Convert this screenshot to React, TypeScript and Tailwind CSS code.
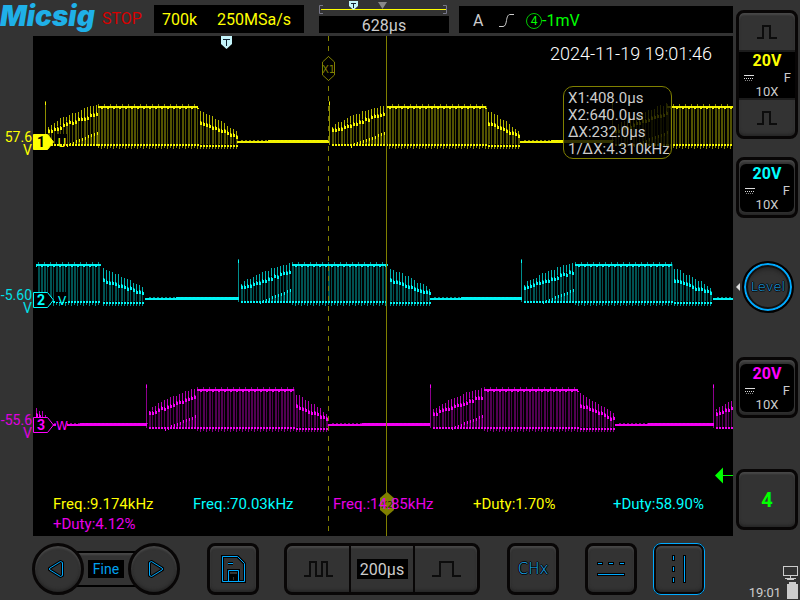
import type { ReactNode } from "react";

type Burst = { start: number; rampEnd: number; flatEnd: number; fallEnd: number };

type Wave = {
  color: string;
  top: number;
  bottom: number;
  rest: number;
  bursts: Burst[];
};

const WAVES: Wave[] = [
  {
    color: "#ffff00",
    top: 106,
    bottom: 144,
    rest: 141,
    bursts: [
      { start: 45, rampEnd: 98, flatEnd: 198, fallEnd: 237 },
      { start: 329, rampEnd: 386, flatEnd: 486, fallEnd: 520 },
      { start: 612, rampEnd: 667, flatEnd: 767, fallEnd: 802 },
    ],
  },
  {
    color: "#00ffff",
    top: 264,
    bottom: 301,
    rest: 298,
    bursts: [
      { start: -45, rampEnd: 8, flatEnd: 101, fallEnd: 145 },
      { start: 238, rampEnd: 292, flatEnd: 388, fallEnd: 430 },
      { start: 521, rampEnd: 575, flatEnd: 672, fallEnd: 713 },
    ],
  },
  {
    color: "#ff00ff",
    top: 389,
    bottom: 427,
    rest: 424,
    bursts: [
      { start: -137, rampEnd: -87, flatEnd: 10, fallEnd: 46 },
      { start: 146, rampEnd: 197, flatEnd: 294, fallEnd: 328 },
      { start: 430, rampEnd: 484, flatEnd: 578, fallEnd: 615 },
      { start: 713, rampEnd: 765, flatEnd: 860, fallEnd: 900 },
    ],
  },
];

const PERIOD = 284;
const LEFT = 36;
const RIGHT = 733;

function buildWave(w: Wave) {
  let seed = 7;
  const rand = () => {
    seed = (seed * 1103515245 + 12345) % 2147483648;
    return seed / 2147483648;
  };
  const out = { dim: "", mid: "", bright: "" };
  const rect = (layer: "dim" | "mid" | "bright", x: number, y: number, wd: number, h: number) => {
    const x0 = Math.max(LEFT, Math.round(x));
    const x1 = Math.min(RIGHT, Math.round(x + wd));
    if (x1 > x0 && h > 0) out[layer] += `M${x0} ${Math.round(y)}h${x1 - x0}v${Math.round(h)}H${x0}z`;
  };
  const mix = (a: number, b: number, f: number) => a + (b - a) * f;
  const { top, bottom } = w;

  for (const b of w.bursts) {
    const s = b.start;
    rect("mid", s, top - 5, 1, bottom - top + 6);
    rect("bright", s, top - 4, 1, 3);

    let n = 0;
    for (let x = s + 3; x < b.rampEnd; x += 3) {
      const f = (x - s) / (b.rampEnd - s);
      const peak = mix(bottom - 14, top - 3, Math.pow(f, 0.65)) + rand() * 2;
      const band = Math.max(peak, mix(bottom - 14, top + 5, f) + rand() * 2 - 1);
      rect("dim", x, peak, 1, bottom - peak + 2);
      if (n % 3 === 0) rect("dim", x + 1, band, 1, bottom - band);
      rect("mid", x, peak, 1, band - peak);
      rect("bright", x, band, 1, 4);
      rect("bright", x + 1, band + 1, 1, 3);
      rect("bright", x, bottom, 2, 2);
      if (f > 0.35) {
        const low = mix(bottom + 1, bottom - 13, (f - 0.35) / 0.65);
        rect("mid", x + 1, low, 1, bottom - low);
        rect("bright", x + 1, low, 1, 3);
      }
      n++;
    }

    n = 0;
    for (let x = b.rampEnd; x < b.flatEnd; x += 3) {
      rect("dim", x, top, 1, bottom - top + 2);
      if (n % 2 === 0 || rand() > 0.6) rect("dim", x + 1, top, 1, bottom - top + 2);
      rect("bright", x, top, Math.min(3, b.flatEnd - x), 2);
      if (n % 2 === 0) rect("mid", x, top - 2, 1, 2);
      if (n % 2 === 1) rect("bright", x, top + 2, 2, 1);
      rect("bright", x, bottom, 2, 2);
      rect("mid", x, bottom + 2, 1, n % 2 ? 3 : 2);
      n++;
    }

    n = 0;
    for (let x = b.flatEnd + 2; x < b.fallEnd; x += 3) {
      const f = (x - b.flatEnd) / (b.fallEnd - b.flatEnd);
      const peak = mix(top + 3, bottom - 13, Math.pow(f, 1.15)) + rand() * 2;
      const band = mix(top + 14, bottom - 9, f) + rand() * 2 - 1;
      rect("dim", x, peak, 1, bottom - peak + 2);
      if (n % 2 === 0) rect("dim", x + 1, band, 1, bottom - band);
      rect("mid", x, peak, 1, band - peak + 2);
      rect("bright", x, band, 1, 4);
      rect("bright", x + 1, band + 1, 1, 3);
      rect("bright", x, bottom + 1, 2, 2);
      rect("mid", x, bottom + 3, 1, 2);
      n++;
    }

    const next = s + PERIOD;
    const third = b.fallEnd + (next - b.fallEnd) / 3;
    rect("bright", b.fallEnd, w.rest, third - b.fallEnd, 2);
    rect("bright", third, w.rest - 1, next - third, 3);
    for (let x = b.fallEnd + 4; x < next; x += 4) rect("mid", x, w.rest - 1, 2, 1);
  }
  return out;
}

const SHAPES = WAVES.map((w) => ({ color: w.color, ...buildWave(w) }));

function Flag({ y, n, label, color, filled }: { y: number; n: string; label: string; color: string; filled?: boolean }) {
  return (
    <g>
      <path d={`M33.5 ${y - 7.5}H47.5L53.5 ${y}L47.5 ${y + 7.5}H33.5z`} fill={filled ? color : "#000"} stroke={color} />
      <text x="41" y={y + 5} textAnchor="middle" fontSize="14" fontWeight="700" fill={filled ? "#000" : color} className="font-['Roboto']">
        {n}
      </text>
      <rect x="56" y={y - 8} width="11" height="10" fill="#000" />
      <text x="62" y={y + 5} textAnchor="middle" fontSize="12" fill={color} className="font-['DejaVu_Sans']">
        {label}
      </text>
    </g>
  );
}

function Scope() {
  return (
    <svg viewBox="33 36 700 500" preserveAspectRatio="none" className="absolute inset-0 h-full w-full">
      {SHAPES.map((s) => (
        <g key={s.color} fill={s.color} shapeRendering="crispEdges">
          <path d={s.dim} fillOpacity="0.32" />
          <path d={s.mid} fillOpacity="0.55" />
          <path d={s.bright} fillOpacity="0.95" />
        </g>
      ))}
      <Flag y={142} n="1" label="U" color="#ffff00" filled />
      <Flag y={300} n="2" label="V" color="#00ffff" />
      <Flag y={425} n="3" label="W" color="#ff00ff" />
      <path d="M328.5 36V536" stroke="#808000" strokeDasharray="5 5" />
      <path d="M386.5 36V536" stroke="#808000" />
      <path d="M328.5 56.5L334.5 62V75L328.5 80.5L322.5 75V62z" fill="#000" stroke="#808000" />
      <text x="328.5" y="73" textAnchor="middle" fontSize="10" fill="#808000" className="font-['DejaVu_Sans']">
        X1
      </text>
      <path d="M221 36h11v8l-5.500 5l-5.500-5z" fill="#c4f4fa" />
      <path d="M223 39.500h7M226.500 39v7" stroke="#123" fill="none" />
      <path d="M715 475.500l8-8v16z" fill="#00ff00" />
      <path d="M722 475.500h11" stroke="#00ff00" />
    </svg>
  );
}

const READINGS = [
  { text: "Freq.:9.174kHz", tone: "text-[#ffff00]" },
  { text: "Freq.:70.03kHz", tone: "text-[#00ffff]" },
  { text: "Freq.:14.85kHz", tone: "text-[#e800e8]" },
  { text: "+Duty:1.70%", tone: "text-[#ffff00]" },
  { text: "+Duty:58.90%", tone: "text-[#00ffff]" },
  { text: "+Duty:4.12%", tone: "text-[#e800e8]" },
];

const KEY =
  "flex items-center justify-center border-[3px] border-[#080606] bg-[#333] shadow-[inset_0_2px_2px_#484848,inset_0_-2px_3px_#262626]";

function Key({ label, round, className = "", children }: { label: string; round?: boolean; className?: string; children: ReactNode }) {
  return (
    <button aria-label={label} className={`${KEY} h-[52px] w-[52px] ${round ? "rounded-full" : "rounded-lg"} ${className}`}>
      {children}
    </button>
  );
}

function ChannelInfo({ tone }: { tone: string }) {
  return (
    <span className="flex w-full flex-col items-center text-[#ccc]">
      <span className={`text-base leading-[18px] font-bold ${tone}`}>20V</span>
      <span className="flex w-full items-center justify-between pr-1 pl-[5px] text-[13px] leading-4">
        <svg width="10" height="6" viewBox="0 0 10 6" fill="none" stroke="#ddd" shapeRendering="crispEdges">
          <path d="M0 .5h10" />
          <path d="M0 3.500h10" strokeDasharray="1 1" />
          <path d="M1 5.500h8" strokeDasharray="1 1" opacity=".6" />
        </svg>
        F
      </span>
      <span className="text-[13px] leading-3">10X</span>
    </span>
  );
}

function ChannelKey({ name, tone }: { name: string; tone: string }) {
  return (
    <button aria-label={name} className={`${KEY} h-[61px] w-full rounded-lg`}>
      <span className="flex h-12 w-[54px] items-start rounded-md bg-black pt-px">
        <ChannelInfo tone={tone} />
      </span>
    </button>
  );
}

function SmallPulse() {
  return (
    <svg width="20" height="14" viewBox="0 0 20 14" fill="none" stroke="#0c0c0c" strokeWidth="2" shapeRendering="crispEdges">
      <path d="M0 13H6V1H13V13H20" />
    </svg>
  );
}

function GutterLabel({ value, className }: { value: string; className: string }) {
  return (
    <div className={`flex flex-col items-end pr-px text-sm leading-[13px] ${className}`}>
      <span>{value}</span>
      <span>V</span>
    </div>
  );
}

const OUTLINED =
  "font-['DejaVu_Sans',sans-serif] font-extralight text-[#1ab4ff] [text-shadow:1px_0_#000,-1px_0_#000,0_1px_#000,0_-1px_#000]";

export default function App() {
  return (
    <div className="flex min-h-screen overflow-hidden bg-[#333] font-['Roboto',sans-serif] text-[#ccc]">
      <main className="flex min-w-0 flex-1 flex-col">
        <header className="flex h-9 items-start text-base">
          <h1 className="w-[102px] font-['Inter',sans-serif] text-[28px] leading-8 font-black text-[#1fb0e8] italic">Micsig</h1>
          <span className="w-[52px] leading-[37px] text-[#d80000]">STOP</span>
          <div className="mt-[5px] flex h-7 w-[150px] items-center gap-5 bg-black pt-px pl-2 text-[#ffff00]">
            <span>700k</span>
            <span>250MSa/s</span>
          </div>
          <div className="ml-[15px] flex w-[130px] flex-col">
            <svg viewBox="0 0 130 16" className="h-4 w-full" fill="none">
              <path d="M2 9.500H128" stroke="#ffff00" />
              <path d="M4 5.500H.5V13.500H4M124 5.500h3.500V13.500H124" stroke="#778" />
              <path d="M30 1h9v5l-4.500 4l-4.500-4z" fill="#c4f4fa" />
              <path d="M32 3.500h5M34.500 3v5" stroke="#123" />
              <path d="M59 2h9l-4.500 7z" fill="#888" />
            </svg>
            <div className="flex h-[17px] items-center justify-center bg-black pt-0.5">628µs</div>
          </div>
          <div className="mt-1.5 ml-2.5 flex h-[27px] flex-1 items-center bg-black pt-0.5 pl-3.5">
            <span className="w-[26px]">A</span>
            <svg width="15" height="13" viewBox="0 0 15 13" fill="none" stroke="#ccc">
              <path d="M0 12.500H4C6 12.500 7 10 7.500 6.500S9 .5 11 .5H15" />
            </svg>
            <span className="ml-3 flex items-center text-[#00ff00]">
              <span className="flex size-4 items-center justify-center rounded-full border border-[#00c800] text-xs">4</span>
              <span>-1mV</span>
            </span>
          </div>
        </header>

        <div className="flex min-h-0 flex-1">
          <div className="flex w-[33px] shrink-0 flex-col">
            <GutterLabel value="57.6" className="mt-[95px] text-[#ffff00]" />
            <GutterLabel value="-5.60" className="mt-[132px] text-[#00e0e8]" />
            <GutterLabel value="-55.6" className="mt-[99px] text-[#e000e0]" />
          </div>
          <section className="relative flex min-h-[500px] flex-1 flex-col bg-black">
            <Scope />
            <time className="relative mt-[7px] mr-[21px] self-end text-lg leading-[22px] font-light text-white">2024-11-19 19:01:46</time>
            <div className="absolute top-[50px] right-[61px] h-[73px] w-[109px] rounded-[10px] border border-[#808000] bg-black/80 pt-[3px] pl-1 text-[15px] leading-[17px]">
              <p>X1:408.0µs</p>
              <p>X2:640.0µs</p>
              <p>ΔX:232.0µs</p>
              <p>1/ΔX:4.310kHz</p>
            </div>
            <svg viewBox="0 0 14 24" className="absolute bottom-5 left-[347px] h-6 w-3.5">
              <path d="M7 0L14 6V18L7 24L0 18V6z" fill="#808000" />
              <text x="7" y="16" textAnchor="middle" fontSize="9" fill="#222200" className="font-['DejaVu_Sans']">
                X2
              </text>
            </svg>
            <div className="relative mt-auto grid grid-cols-5 pb-0.5 text-[15px] leading-5">
              {READINGS.map((r) => (
                <span key={r.text} className={`pl-5 whitespace-nowrap ${r.tone}`}>
                  {r.text}
                </span>
              ))}
            </div>
          </section>
        </div>

        <footer className="flex h-16 items-start pt-[7px] pl-8">
          <div className="flex items-center">
            <Key label="Previous" round className="relative z-10">
              <svg width="16" height="18" viewBox="0 0 16 18" fill="none" stroke="#0af" strokeLinejoin="round" className="-ml-1">
                <path d="M2 8L12.500 1.500L14.500 2.500V15.500L12.500 16.500L2 10Q.5 9 2 8z" stroke="#000" strokeWidth="3" />
                <path d="M2 8L12.500 1.500L14.500 2.500V15.500L12.500 16.500L2 10Q.5 9 2 8z" />
              </svg>
            </Key>
            <div className="-mx-3 flex h-9 w-[68px] items-center justify-center border-y-2 border-black shadow-[inset_0_2px_2px_#484848]">
              <span className="flex h-[18px] w-9 items-center justify-center bg-black text-sm text-[#00a0f0]">Fine</span>
            </div>
            <Key label="Next" round className="relative z-10">
              <svg width="16" height="18" viewBox="0 0 16 18" fill="none" stroke="#0af" strokeLinejoin="round" className="-mr-1">
                <path d="M14 8L3.500 1.500L1.500 2.500V15.500L3.500 16.500L14 10Q15.500 9 14 8z" stroke="#000" strokeWidth="3" />
                <path d="M14 8L3.500 1.500L1.500 2.500V15.500L3.500 16.500L14 10Q15.500 9 14 8z" />
              </svg>
            </Key>
          </div>
          <Key label="Save" className="ml-[27px]">
            <svg width="25" height="28" viewBox="0 0 25 28" fill="none">
              <path d="M1.500 1.500H16.500L23.500 8.500V26.500H1.500z M7 8.500H12 M7.500 26V15.500H17.500V26 M10.500 26V20.500H14.500V26" stroke="#000" strokeWidth="3" />
              <path d="M1.500 1.500H16.500L23.500 8.500V26.500H1.500z M7 8.500H12 M7.500 26V15.500H17.500V26" stroke="#0af" />
            </svg>
          </Key>
          <div className="ml-[25px] flex h-[52px] w-[196px] rounded-lg border-[3px] border-[#080606] shadow-[inset_0_2px_2px_#484848,inset_0_-2px_3px_#262626]">
            <button aria-label="Slower time base" className="flex flex-1 items-center justify-center">
              <svg width="29" height="16" viewBox="0 0 29 16" fill="none" stroke="#0c0c0c" strokeWidth="2" shapeRendering="crispEdges">
                <path d="M0 15H6V1H12V15H18V1H23V15H29" />
              </svg>
            </button>
            <div className="flex w-[66px] items-center justify-center border-x-2 border-[#080606]">
              <span className="flex h-5 w-[51px] items-center justify-center bg-black pt-px text-base">200µs</span>
            </div>
            <button aria-label="Faster time base" className="flex flex-1 items-center justify-center">
              <svg width="29" height="16" viewBox="0 0 29 16" fill="none" stroke="#0c0c0c" strokeWidth="2" shapeRendering="crispEdges">
                <path d="M0 15H8V1H21V15H29" />
              </svg>
            </button>
          </div>
          <Key label="CHx" className="ml-[27px]">
            <span className={`text-[15px] ${OUTLINED}`}>CHx</span>
          </Key>
          <Key label="Horizontal cursors" className="ml-[26px]">
            <svg width="28" height="14" viewBox="0 0 28 14" shapeRendering="crispEdges">
              <path d="M0 0h6v3H0zM11 0h6v3h-6zM22 0h6v3h-6zM0 11h28v3H0z" fill="#000" />
              <path d="M1 1h4v1H1zM12 1h4v1h-4zM23 1h4v1h-4zM1 12h26v1H1z" fill="#0af" />
            </svg>
          </Key>
          <Key label="Vertical cursors" className="ml-4 outline outline-offset-[-1px] outline-[#0af]">
            <svg width="14" height="28" viewBox="0 0 14 28" shapeRendering="crispEdges">
              <path d="M0 0h3v6H0zM0 11h3v6H0zM0 22h3v6H0zM11 0h3v28h-3z" fill="#000" />
              <path d="M1 1h1v4H1zM1 12h1v4H1zM1 23h1v4H1zM12 1h1v26h-1z" fill="#0af" />
            </svg>
          </Key>
        </footer>
      </main>

      <aside className="flex w-[67px] shrink-0 flex-col pt-2.5 pr-0.5 pl-[3px]">
        <div className={`${KEY} h-[129px] flex-col rounded-lg`}>
          <button aria-label="Channel 1 scale up" className="flex h-[37px] w-full items-center justify-center">
            <SmallPulse />
          </button>
          <div className="flex h-[50px] w-full items-start border-y-2 border-[#1c1c1c] bg-black">
            <ChannelInfo tone="text-[#ffff00]" />
          </div>
          <button aria-label="Channel 1 scale down" className="flex w-full flex-1 items-center justify-center">
            <SmallPulse />
          </button>
        </div>
        <div className="mt-[18px]">
          <ChannelKey name="Channel 2" tone="text-[#00ffff]" />
        </div>
        <div className="mt-[43px] flex items-center justify-between">
          <svg width="4" height="8" viewBox="0 0 4 8">
            <path d="M4 0V8L0 4z" fill="#ddd" />
          </svg>
          <button
            aria-label="Trigger level"
            className="mr-1 flex size-[52px] items-center justify-center rounded-full border-2 border-black bg-[#333] shadow-[inset_0_0_0_2px_#0af,inset_0_0_0_4px_#111,inset_0_6px_4px_#222]"
          >
            <span className={`text-[13px] ${OUTLINED}`}>Level</span>
          </button>
        </div>
        <div className="mt-11">
          <ChannelKey name="Channel 3" tone="text-[#ff00ff]" />
        </div>
        <button aria-label="Channel 4" className={`${KEY} mt-[51px] h-[61px] rounded-lg text-xl font-bold text-[#00ff00]`}>
          4
        </button>
        <div className="mt-auto flex items-end justify-end gap-0.5 pb-px text-[13px] leading-3">
          <span>19:01</span>
          <span className="flex flex-col items-end gap-0.5">
            <svg width="15" height="14" viewBox="0 0 15 14" fill="none" stroke="#ccc" shapeRendering="crispEdges">
              <path d="M.5 .5H14.500V9.500H.5zM7.500 10v3M2 12.500h11M4 13.500h7" />
            </svg>
            <svg width="11" height="17" viewBox="0 0 11 17" fill="#ccc">
              <path d="M2 0h7v2h2v15H0V2h2z" />
            </svg>
          </span>
        </div>
      </aside>
    </div>
  );
}
